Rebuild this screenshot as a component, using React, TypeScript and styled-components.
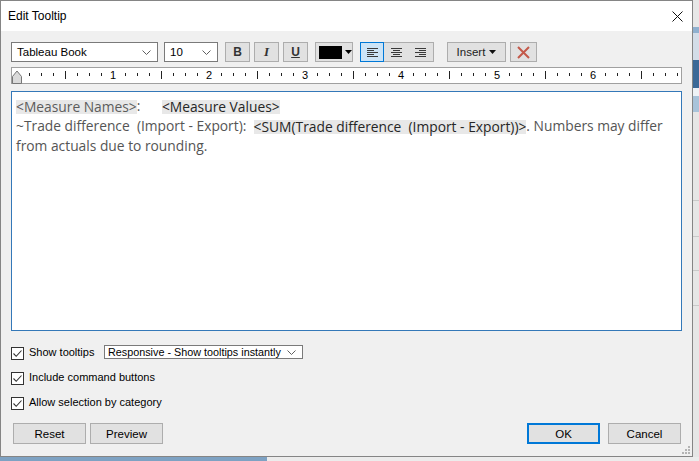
import React from 'react';
import styled, { createGlobalStyle, css } from 'styled-components';

const UI_FONT = '"Liberation Sans", Arial, sans-serif';
const TEXT_FONT = '"Open Sans", Lato, sans-serif';

const GlobalStyle = createGlobalStyle`
  html, body {
    margin: 0;
    padding: 0;
  }
  body {
    width: 699px;
    height: 461px;
    overflow: hidden;
    font-family: ${UI_FONT};
    background-color: #e4e4e4;
    background-image:
      linear-gradient(to right, #7ea2c3 0 267px, #ececec 267px 100%),
      linear-gradient(to bottom,
        #e7e7e7 0 27px, #8fb0cf 27px 33px, #d3dde8 33px 60px,
        #3c6997 60px 88px, #eef2f6 88px 96px, #a8c3da 96px 112px,
        #e6e6e6 112px 200px, #c9c9c9 200px 201px, #e6e6e6 201px 236px,
        #c9c9c9 236px 237px, #e6e6e6 237px 270px, #c9c9c9 270px 271px,
        #e6e6e6 271px 305px, #c9c9c9 305px 306px, #e6e6e6 306px 100%);
    background-size: 100% 4px, 100% 100%;
    background-position: left bottom, left top;
    background-repeat: no-repeat;
  }
`;

const Dialog = styled.div`
  position: relative;
  width: 693px;
  height: 457px;
  box-sizing: border-box;
  border: 1px solid #858585;
  background: #f0f0f0;
  display: flex;
  flex-direction: column;
  color: #000;
`;

const TitleBar = styled.div`
  height: 30px;
  background: #fff;
  display: flex;
  align-items: center;
  justify-content: space-between;
  padding-left: 7px;
`;

const Title = styled.span`
  font-size: 12px;
  color: #000;
`;

const CloseButton = styled.div`
  width: 11px;
  height: 11px;
  margin-right: 9px;
  display: flex;
`;

const Body = styled.div`
  flex: 1;
  display: flex;
  flex-direction: column;
  padding: 11px 10px 0 10px;
`;

const Toolbar = styled.div`
  display: flex;
  height: 20px;
  align-items: stretch;
`;

const Combo = styled.div<{ $width: number; $gap?: number; $small?: boolean }>`
  width: ${(p) => p.$width}px;
  margin-right: ${(p) => p.$gap ?? 0}px;
  box-sizing: border-box;
  border: 1px solid #7a7a7a;
  background: #fff;
  display: flex;
  align-items: center;
  justify-content: space-between;
  padding: 0 6px 0 ${(p) => (p.$small ? 3 : 5)}px;
  font-size: ${(p) => (p.$small ? 10.8 : 11.5)}px;
  white-space: nowrap;
  color: #000;
`;

const Chevron = () => (
  <svg width="9" height="5" viewBox="0 0 9 5">
    <path d="M0.5 0.5 L4.5 4.5 L8.5 0.5" fill="none" stroke="#606060" strokeWidth="1" />
  </svg>
);

const ToolButton = styled.div<{ $width: number; $gap?: number }>`
  width: ${(p) => p.$width}px;
  margin-right: ${(p) => p.$gap ?? 0}px;
  box-sizing: border-box;
  border: 1px solid #adadad;
  background: #e1e1e1;
  display: flex;
  align-items: center;
  justify-content: center;
  gap: 4px;
  font-size: 11.5px;
  color: #222;
`;

const ColorButton = styled(ToolButton)`
  justify-content: flex-start;
  gap: 3px;
  padding-left: 3px;
`;

const Letter = styled.span<{ $kind: 'b' | 'i' | 'u' }>`
  font-family: "Liberation Sans", Arial, sans-serif;
  font-weight: bold;
  font-size: 12px;
  color: #333;
  ${(p) => p.$kind === 'i' && css`font-style: italic; font-family: "Liberation Serif", serif; font-size: 13px;`}
  ${(p) => p.$kind === 'u' && css`text-decoration: underline;`}
`;

const Swatch = styled.span`
  width: 23px;
  height: 13px;
  background: #000;
`;

const AlignGroup = styled.div`
  width: 74px;
  margin-right: 13px;
  box-sizing: border-box;
  border: 1px solid #adadad;
  background: #e1e1e1;
  display: flex;
`;

const AlignButton = styled.div<{ $active?: boolean }>`
  flex: 1;
  display: flex;
  align-items: center;
  justify-content: center;
  ${(p) =>
    p.$active &&
    css`
      background: #cce4f7;
      outline: 1px solid #0078d7;
      outline-offset: -1px;
      margin: -1px 0 -1px -1px;
    `}
`;

const AlignIcon = ({ side }: { side: 'left' | 'center' | 'right' }) => {
  const rows = [11, 7, 11, 7, 11];
  return (
    <svg width="11" height="9" viewBox="0 0 11 9">
      {rows.map((len, i) => {
        const x = side === 'left' ? 0 : side === 'right' ? 11 - len : (11 - len) / 2;
        return <rect key={i} x={x} y={i * 2} width={len} height="1" fill="#3a3a3a" />;
      })}
    </svg>
  );
};

const DownTriangle = ({ color = '#000' }: { color?: string }) => (
  <svg width="7" height="4" viewBox="0 0 7 4">
    <path d="M0 0 H7 L3.5 4 Z" fill={color} />
  </svg>
);

const RulerSvg = styled.svg`
  display: block;
  margin-top: 5px;
  overflow: visible;
`;

const Ruler = () => {
  const ticks: React.ReactNode[] = [];
  for (let i = 1; i * 12 + 6 < 668; i++) {
    const x = 6 + i * 12;
    if (i % 8 === 0) {
      ticks.push(
        <text key={i} x={x} y={12} fontSize="11" textAnchor="middle" fill="#000" fontFamily={UI_FONT}>
          {i / 8}
        </text>
      );
    } else if (i % 4 === 0) {
      ticks.push(<rect key={i} x={x} y={4} width="1" height="8" fill="#222" />);
    } else {
      ticks.push(<rect key={i} x={x} y={6} width="1" height="3" fill="#222" />);
    }
  }
  return (
    <RulerSvg width="671" height="17" viewBox="0 0 671 17">
      <rect x="0.5" y="0.5" width="670" height="16" fill="#fff" stroke="#a0a0a0" />
      {ticks}
      <path d="M1.5 16.5 V9.5 L6 4 L10.5 9.5 V16.5 Z" fill="#dadada" stroke="#777" />
    </RulerSvg>
  );
};

const Editor = styled.div`
  margin-top: 7px;
  height: 240px;
  box-sizing: border-box;
  border: 1px solid #3478b8;
  background: #fff;
  padding: 3px 4px;
  font-family: ${TEXT_FONT};
  font-size: 13.8px;
  color: #555;
`;

const Line = styled.div<{ $height: number }>`
  height: ${(p) => p.$height}px;
  line-height: ${(p) => p.$height}px;
  white-space: pre;
`;

const Field = styled.span<{ $muted?: boolean }>`
  display: inline-block;
  line-height: 14px;
  background: #e8e8e8;
  color: ${(p) => (p.$muted ? '#5c5c5c' : '#262626')};
  vertical-align: middle;
`;

const Options = styled.div`
  margin-top: 11px;
  display: flex;
  flex-direction: column;
  gap: 5px;
`;

const OptionRow = styled.div`
  height: 20px;
  display: flex;
  align-items: center;
  font-size: 11px;
  color: #000;
`;

const CheckBox = styled.span`
  width: 13px;
  height: 13px;
  box-sizing: border-box;
  border: 1px solid #333;
  background: #fff;
  margin: 2px 5px 0 0;
  display: flex;
  align-items: center;
  justify-content: center;
`;

const Check = () => (
  <svg width="11" height="11" viewBox="0 0 11 11">
    <path d="M1.5 5.5 L4.2 8.3 L9.5 2.5" fill="none" stroke="#333" strokeWidth="1.1" />
  </svg>
);

const Label = styled.span<{ $width?: number }>`
  width: ${(p) => (p.$width ? `${p.$width}px` : 'auto')};
  white-space: nowrap;
`;

const Footer = styled.div`
  margin-top: 11px;
  display: flex;
  height: 21px;
  padding: 0 1px 0 2px;
`;

const Spacer = styled.div`
  flex: 1;
`;

const DialogButton = styled.div<{ $primary?: boolean; $gap?: number }>`
  width: 73px;
  margin-right: ${(p) => p.$gap ?? 0}px;
  box-sizing: border-box;
  border: ${(p) => (p.$primary ? '2px solid #0078d7' : '1px solid #adadad')};
  background: #e1e1e1;
  display: flex;
  align-items: center;
  justify-content: center;
  font-size: 11.5px;
  color: #000;
`;

const Grip = styled.svg`
  position: absolute;
  right: 2px;
  bottom: 2px;
`;

export default function App() {
  return (
    <>
      <GlobalStyle />
      <Dialog>
        <TitleBar>
          <Title>Edit Tooltip</Title>
          <CloseButton>
            <svg width="11" height="11" viewBox="0 0 11 11">
              <path d="M0.5 0.5 L10.5 10.5 M10.5 0.5 L0.5 10.5" stroke="#111" strokeWidth="1" />
            </svg>
          </CloseButton>
        </TitleBar>
        <Body>
          <Toolbar>
            <Combo $width={147} $gap={6}>
              <span>Tableau Book</span>
              <Chevron />
            </Combo>
            <Combo $width={54} $gap={7}>
              <span>10</span>
              <Chevron />
            </Combo>
            <ToolButton $width={25} $gap={4}>
              <Letter $kind="b">B</Letter>
            </ToolButton>
            <ToolButton $width={25} $gap={4}>
              <Letter $kind="i">I</Letter>
            </ToolButton>
            <ToolButton $width={25} $gap={7}>
              <Letter $kind="u">U</Letter>
            </ToolButton>
            <ColorButton $width={38} $gap={7}>
              <Swatch />
              <DownTriangle />
            </ColorButton>
            <AlignGroup>
              <AlignButton $active>
                <AlignIcon side="left" />
              </AlignButton>
              <AlignButton>
                <AlignIcon side="center" />
              </AlignButton>
              <AlignButton>
                <AlignIcon side="right" />
              </AlignButton>
            </AlignGroup>
            <ToolButton $width={59} $gap={4}>
              <span>Insert</span>
              <DownTriangle color="#111" />
            </ToolButton>
            <ToolButton $width={27}>
              <svg width="13" height="13" viewBox="0 0 13 13">
                <path d="M1 1 L12 12 M12 1 L1 12" stroke="#c4594a" strokeWidth="2" />
              </svg>
            </ToolButton>
          </Toolbar>

          <Ruler />

          <Editor>
            <Line $height={21}>
              <Field $muted>{'<Measure Names>'}</Field>
              {':      '}
              <Field>{'<Measure Values>'}</Field>
            </Line>
            <Line $height={20}>
              {'~Trade difference  (Import - Export):  '}
              <Field>{'<SUM(Trade difference  (Import - Export))>'}</Field>
              {'. Numbers may differ'}
            </Line>
            <Line $height={20}>from actuals due to rounding.</Line>
          </Editor>

          <Options>
            <OptionRow>
              <CheckBox>
                <Check />
              </CheckBox>
              <Label $width={75}>Show tooltips</Label>
              <Combo $width={199} $small>
                <span>Responsive - Show tooltips instantly</span>
                <Chevron />
              </Combo>
            </OptionRow>
            <OptionRow>
              <CheckBox>
                <Check />
              </CheckBox>
              <Label>Include command buttons</Label>
            </OptionRow>
            <OptionRow>
              <CheckBox>
                <Check />
              </CheckBox>
              <Label>Allow selection by category</Label>
            </OptionRow>
          </Options>

          <Footer>
            <DialogButton $gap={4}>Reset</DialogButton>
            <DialogButton>Preview</DialogButton>
            <Spacer />
            <DialogButton $primary $gap={8}>OK</DialogButton>
            <DialogButton>Cancel</DialogButton>
          </Footer>
        </Body>
        <Grip width="9" height="9" viewBox="0 0 9 9">
          {[
            [7, 1],
            [4, 4],
            [7, 4],
            [1, 7],
            [4, 7],
            [7, 7],
          ].map(([x, y], i) => (
            <rect key={i} x={x} y={y} width="2" height="2" fill="#b4b4b4" />
          ))}
        </Grip>
      </Dialog>
    </>
  );
}
